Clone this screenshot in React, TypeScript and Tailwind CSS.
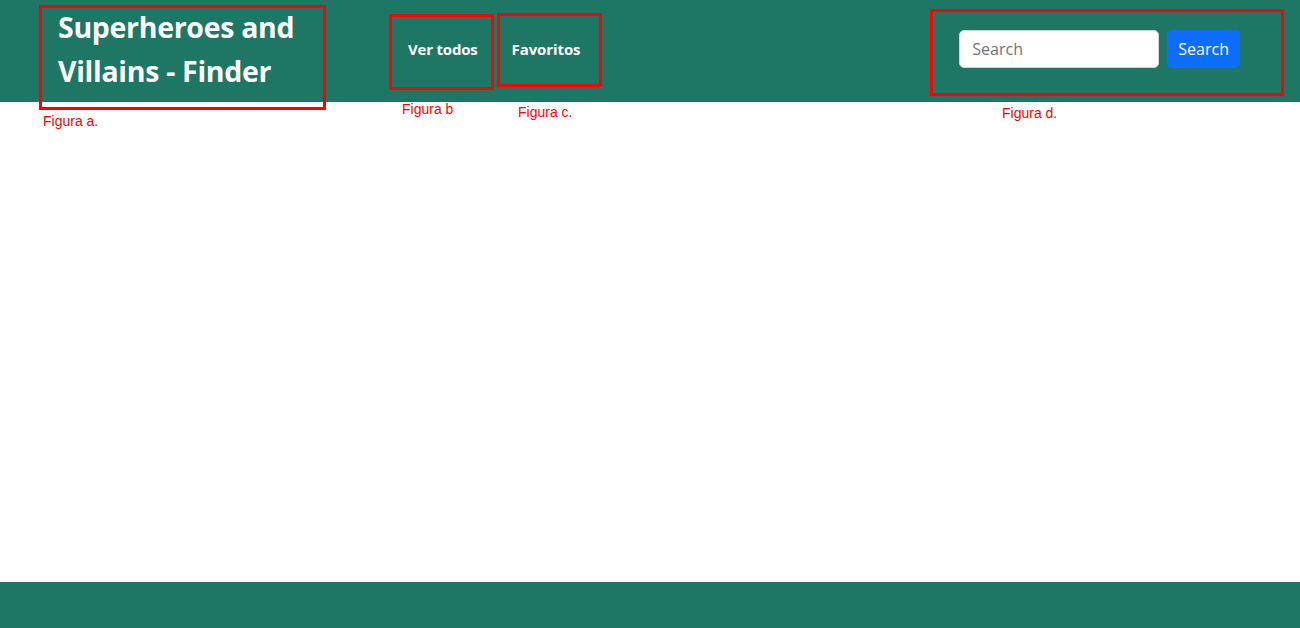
import React from "react";

function Note({ className, children }: { className: string; children?: React.ReactNode }) {
  return <div className={`absolute pointer-events-none ${className}`}>{children}</div>;
}

export default function App() {
  return (
    <div className="relative flex flex-col h-[628px] bg-white font-['Open_Sans','Noto_Sans',sans-serif]">
      <header className="flex items-center h-[102px] bg-[#1e7665] pl-[58px] pr-[60px] pb-[4px] shrink-0">
        <a className="w-[256px] text-white font-bold text-[28.5px] leading-[44px] tracking-[-0.3px]">
          Superheroes and Villains - Finder
        </a>
        <nav className="flex items-center ml-[94px] gap-[34px] text-white font-bold text-[15px]">
          <a className="tracking-[-0.2px]">Ver todos</a>
          <a className="tracking-[-0.1px]">Favoritos</a>
        </nav>
        <form className="flex items-center gap-2 ml-auto" onSubmit={(e) => e.preventDefault()}>
          <input
            placeholder="Search"
            className="w-[200px] h-[38px] px-3 rounded-[5px] bg-white border border-[#ced4da] text-[16px] text-gray-700 placeholder:text-[#6c757d] outline-none"
          />
          <button className="h-[38px] px-[11px] rounded-[5px] bg-[#0d6efd] text-white text-[16px]">Search</button>
        </form>
      </header>

      <main className="flex-1" />

      <footer className="h-[46px] bg-[#1e7665] shrink-0" />

      {/* annotation overlays */}
      <Note className="left-[39px] top-[5px] w-[287px] h-[105px] border-[3px] border-[#ff0000]" />
      <Note className="left-[389px] top-[14px] w-[105px] h-[76px] border-[3px] border-[#ff0000]" />
      <Note className="left-[497px] top-[13px] w-[105px] h-[74px] border-[3px] border-[#ff0000]" />
      <Note className="left-[930px] top-[9px] w-[354px] h-[87px] border-[3px] border-[#ff0000]" />
      <Note className="left-[43px] top-[111px] text-[14px] text-[#ff0000] font-['Liberation_Sans',sans-serif]">Figura a.</Note>
      <Note className="left-[402px] top-[99px] text-[14px] text-[#ff0000] font-['Liberation_Sans',sans-serif]">Figura b</Note>
      <Note className="left-[518px] top-[102px] text-[14px] text-[#ff0000] font-['Liberation_Sans',sans-serif]">Figura c.</Note>
      <Note className="left-[1002px] top-[103px] text-[14px] text-[#ff0000] font-['Liberation_Sans',sans-serif]">Figura d.</Note>
    </div>
  );
}
